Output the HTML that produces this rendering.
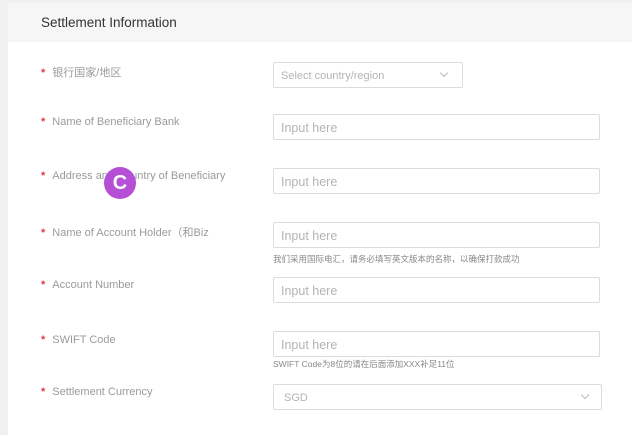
<!DOCTYPE html>
<html><head><meta charset="utf-8"><style>
body{margin:0;width:632px;height:435px;background:#eef0f2;position:relative;overflow:hidden;font-family:"Liberation Sans","Noto Sans CJK SC",sans-serif}
.card{position:absolute;left:8px;top:3px;right:0;bottom:0;background:#fff}
.hd{position:absolute;left:8px;top:3px;right:0;height:39px;background:#f6f6f6}
.hd span{position:absolute;left:33px;top:12px;font-size:13.5px;color:#333;font-weight:500}
.lb{position:absolute;left:41px;font-size:11px;color:#9a9a9a;white-space:nowrap}
.lb b{color:#e5393b;font-weight:bold;margin-right:7px}
.in{position:absolute;left:273px;width:327px;height:26px;border:1px solid #dcdcdc;border-radius:2px;box-sizing:border-box;font-size:12.5px;color:#b4b4b4;padding:7px 7px;line-height:13px}
.ht{position:absolute;left:273px;font-size:8.5px;color:#888;white-space:nowrap}
.ch{position:absolute;width:5px;height:5px;border-right:1px solid #bbb;border-bottom:1px solid #bbb;transform:rotate(45deg)}
.c{position:absolute;left:104px;top:167px;width:32px;height:32px;border-radius:50%;background:#b54fd6;color:#fff;font-weight:bold;font-size:20px;text-align:center;line-height:32px}
</style></head><body>
<div class="card"></div>
<div class="hd"><span>Settlement Information</span></div>
<div class="lb" style="top:64px"><b>*</b>银行国家/地区</div>
<div class="in" style="top:62px;width:190px;font-size:11px">Select country/region<i class="ch" style="left:167px;top:7px"></i></div>
<div class="lb" style="top:116px"><b>*</b>Name of Beneficiary Bank</div>
<div class="in" style="top:114px">Input here</div>
<div class="lb" style="top:170px"><b>*</b>Address and Country of Beneficiary</div>
<div class="in" style="top:168px">Input here</div>
<div class="lb" style="top:224px"><b>*</b>Name of Account Holder（和Biz</div>
<div class="in" style="top:222px">Input here</div>
<div class="ht" style="top:253px">我们采用国际电汇，请务必填写英文版本的名称，以确保打款成功</div>
<div class="lb" style="top:279px"><b>*</b>Account Number</div>
<div class="in" style="top:277px">Input here</div>
<div class="lb" style="top:334px"><b>*</b>SWIFT Code</div>
<div class="in" style="top:331px">Input here</div>
<div class="ht" style="top:358px">SWIFT Code为8位的请在后面添加XXX补足11位</div>
<div class="lb" style="top:386px"><b>*</b>Settlement Currency</div>
<div class="in" style="top:384px;width:329px;font-size:11px;padding-left:10px">SGD<i class="ch" style="left:308px;top:7px"></i></div>
<div class="c">C</div>
</body></html>
